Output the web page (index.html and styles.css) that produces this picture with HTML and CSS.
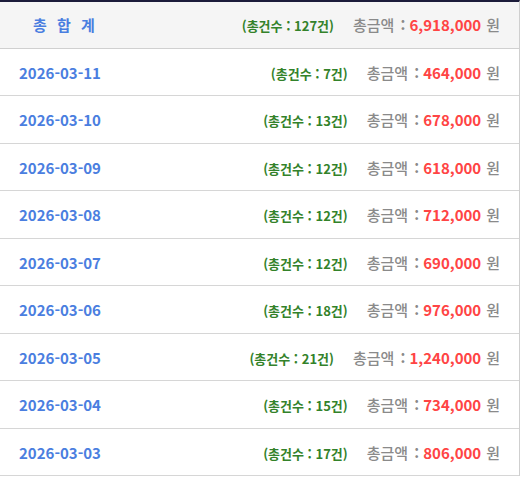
FILE: index.html
```html
<!DOCTYPE html>
<html lang="ko">
<head>
<meta charset="utf-8">
<link rel="stylesheet" href="styles.css">
</head>
<body>
<div class="table">
  <div class="row head">
    <div class="label">총 합 계</div>
    <div class="sum"><span class="cnt">(총건수 : 127건)</span><span class="amt-label">총금액 <b>:</b></span><span class="amt">6,918,000</span><span class="won">원</span></div>
  </div>
  <div class="row"><div class="date">2026-03-11</div><div class="sum"><span class="cnt">(총건수 : 7건)</span><span class="amt-label">총금액 <b>:</b></span><span class="amt">464,000</span><span class="won">원</span></div></div>
  <div class="row"><div class="date">2026-03-10</div><div class="sum"><span class="cnt">(총건수 : 13건)</span><span class="amt-label">총금액 <b>:</b></span><span class="amt">678,000</span><span class="won">원</span></div></div>
  <div class="row"><div class="date">2026-03-09</div><div class="sum"><span class="cnt">(총건수 : 12건)</span><span class="amt-label">총금액 <b>:</b></span><span class="amt">618,000</span><span class="won">원</span></div></div>
  <div class="row"><div class="date">2026-03-08</div><div class="sum"><span class="cnt">(총건수 : 12건)</span><span class="amt-label">총금액 <b>:</b></span><span class="amt">712,000</span><span class="won">원</span></div></div>
  <div class="row"><div class="date">2026-03-07</div><div class="sum"><span class="cnt">(총건수 : 12건)</span><span class="amt-label">총금액 <b>:</b></span><span class="amt">690,000</span><span class="won">원</span></div></div>
  <div class="row"><div class="date">2026-03-06</div><div class="sum"><span class="cnt">(총건수 : 18건)</span><span class="amt-label">총금액 <b>:</b></span><span class="amt">976,000</span><span class="won">원</span></div></div>
  <div class="row"><div class="date">2026-03-05</div><div class="sum"><span class="cnt">(총건수 : 21건)</span><span class="amt-label">총금액 <b>:</b></span><span class="amt">1,240,000</span><span class="won">원</span></div></div>
  <div class="row"><div class="date">2026-03-04</div><div class="sum"><span class="cnt">(총건수 : 15건)</span><span class="amt-label">총금액 <b>:</b></span><span class="amt">734,000</span><span class="won">원</span></div></div>
  <div class="row"><div class="date">2026-03-03</div><div class="sum"><span class="cnt">(총건수 : 17건)</span><span class="amt-label">총금액 <b>:</b></span><span class="amt">806,000</span><span class="won">원</span></div></div>
</div>
</body>
</html>
```
FILE: styles.css
```css
html, body {
  margin: 0;
  padding: 0;
  background: #ffffff;
}
body {
  font-family: "Noto Sans CJK KR", "Noto Sans", sans-serif;
}
.table {
  width: 520px;
  border-top: 2px solid #1c1c3a;
  border-right: 1px solid #cfcfcf;
  box-sizing: border-box;
}
.row {
  height: 47.5px;
  box-sizing: border-box;
  border-bottom: 1px solid #d6d6d6;
  display: flex;
  align-items: center;
  justify-content: space-between;
  padding: 1px 19px 0 19px;
}
.row.head {
  height: 46.5px;
  padding-top: 0;
  background: #f5f5f5;
  border-bottom: 1px solid #d0d0d0;
}
.label {
  color: #4a7ee0;
  font-weight: 700;
  font-size: 15px;
  padding-left: 14px;
  letter-spacing: 3px;
}
.date {
  color: #4a7ee0;
  font-weight: 700;
  font-size: 15px;
}
.sum {
  display: flex;
  align-items: baseline;
  white-space: pre;
}
.cnt {
  color: #33822a;
  font-weight: 700;
  font-size: 13px;
  margin-right: 19px;
}
.amt-label {
  color: #8a8a8a;
  font-size: 15px;
  font-weight: 500;
  margin-right: 4px;
}
.amt-label b {
  font-weight: 700;
  margin-left: 2px;
}
.amt {
  color: #ff4444;
  font-weight: 700;
  font-size: 15px;
}
.won {
  color: #8a8a8a;
  font-size: 15px;
  font-weight: 500;
  margin-left: 5px;
}
```
